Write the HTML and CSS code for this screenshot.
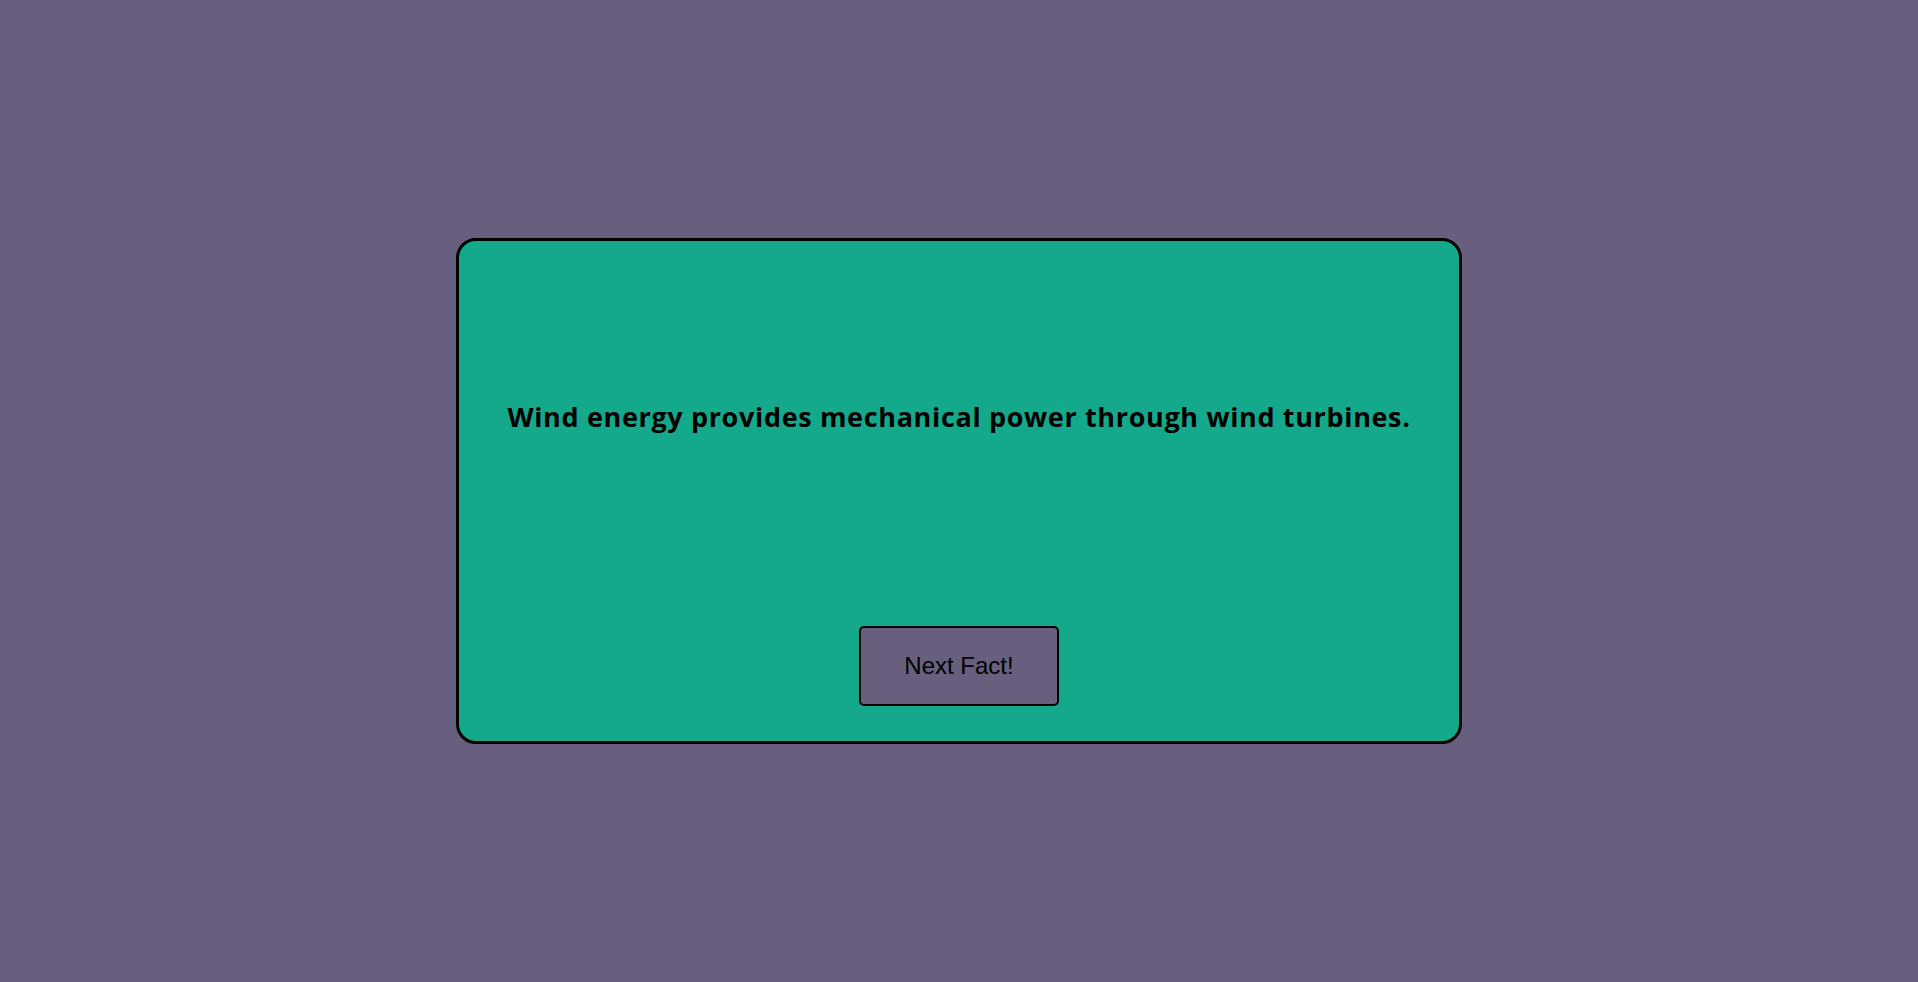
FILE: index.html
```html
<!DOCTYPE html>
<html>
<head>
<meta charset="utf-8">
<link rel="stylesheet" href="styles.css">
</head>
<body>
<main class="page">
  <section class="card">
    <p class="fact">Wind energy provides mechanical power through wind turbines.</p>
    <button class="next">Next Fact!</button>
  </section>
</main>
</body>
</html>
```
FILE: styles.css
```css
html, body {
  margin: 0;
  padding: 0;
  height: 100%;
}
body {
  background: #675f7d;
  font-family: "Liberation Sans", Arial, sans-serif;
}
.page {
  height: 100%;
  display: flex;
  align-items: center;
  justify-content: center;
}
.card {
  box-sizing: border-box;
  width: 1006px;
  height: 506px;
  background: #14a98b;
  border: 3px solid #000;
  border-radius: 20px;
  display: flex;
  flex-direction: column;
  align-items: center;
}
.fact {
  margin: 159px 0 0;
  font-family: "Open Sans", "Noto Sans", sans-serif;
  font-weight: 700;
  font-size: 27px;
  letter-spacing: 0.65px;
  line-height: 34px;
  color: #000;
  text-align: center;
}
.next {
  margin-top: auto;
  margin-bottom: 35px;
  width: 200px;
  height: 80px;
  box-sizing: border-box;
  background: #675f7d;
  border: 2px solid #000;
  border-radius: 5px;
  font-family: "Liberation Sans", Arial, sans-serif;
  font-size: 24px;
  color: #000;
  padding: 0;
}
```
